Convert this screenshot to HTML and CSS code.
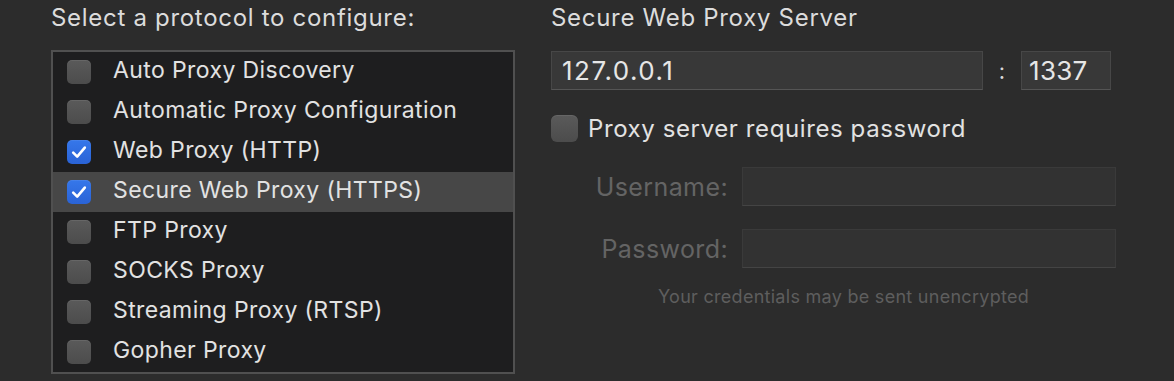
FILE: index.html
```html
<!DOCTYPE html>
<html lang="en">
<head>
<meta charset="utf-8">
<title>Proxies</title>
<link rel="stylesheet" href="styles.css">
</head>
<body>
<div class="pane">
  <section class="protocols">
    <h2 class="heading">Select a protocol to configure:</h2>
    <ul class="list">
      <li class="row"><span class="cb"></span><span class="label">Auto Proxy Discovery</span></li>
      <li class="row"><span class="cb"></span><span class="label">Automatic Proxy Configuration</span></li>
      <li class="row"><span class="cb on"><svg viewBox="0 0 24 24"><path d="M6.2 12.6 L10.2 16.6 L17.8 7.6"/></svg></span><span class="label">Web Proxy (HTTP)</span></li>
      <li class="row sel"><span class="cb on"><svg viewBox="0 0 24 24"><path d="M6.2 12.6 L10.2 16.6 L17.8 7.6"/></svg></span><span class="label">Secure Web Proxy (HTTPS)</span></li>
      <li class="row"><span class="cb"></span><span class="label">FTP Proxy</span></li>
      <li class="row"><span class="cb"></span><span class="label">SOCKS Proxy</span></li>
      <li class="row"><span class="cb"></span><span class="label">Streaming Proxy (RTSP)</span></li>
      <li class="row"><span class="cb"></span><span class="label">Gopher Proxy</span></li>
    </ul>
  </section>
  <section class="server">
    <h2 class="title">Secure Web Proxy Server</h2>
    <div class="hostrow">
      <div class="field host">127.0.0.1</div>
      <span class="colon">:</span>
      <div class="field port">1337</div>
    </div>
    <div class="pwrow"><span class="cb big"></span><span class="pwtext">Proxy server requires password</span></div>
    <div class="cred first"><span class="credlbl">Username:</span><div class="field dis"></div></div>
    <div class="cred"><span class="credlbl">Password:</span><div class="field dis"></div></div>
    <p class="note">Your credentials may be sent unencrypted</p>
  </section>
</div>
</body>
</html>
```
FILE: styles.css
```css
* { box-sizing: border-box; }
body {
  margin: 0;
  background: #2c2c2c;
  font-family: Inter, "Noto Sans", sans-serif;
  color: #dfdfdf;
}
.pane {
  display: flex;
  gap: 36px;
  padding-left: 51px;
}
.protocols { width: 464px; }
.heading {
  margin: 0 0 14px;
  font-size: 24px;
  letter-spacing: 0.7px;
  font-weight: 400;
  line-height: 36px;
  color: #dcdcdc;
}
.list {
  margin: 0;
  padding: 0;
  list-style: none;
  border: 2px solid #505050;
  background: #1e1e1f;
}
.row {
  height: 40px;
  display: flex;
  align-items: center;
  padding-left: 14px;
  gap: 22px;
  font-size: 23px;
  letter-spacing: 0.4px;
  color: #e2e2e2;
}
.row.sel { background: #474747; }
.label { position: relative; top: -2px; }
.cb {
  width: 24px;
  height: 24px;
  flex: none;
  border-radius: 5px;
  background: linear-gradient(#5a5a5a, #4c4c4c);
  box-shadow: inset 0 1px 0 rgba(255,255,255,0.08);
  display: flex;
  align-items: center;
  justify-content: center;
}
.cb.on { background: linear-gradient(#3677ea, #2a63d6); }
.cb svg { width: 24px; height: 24px; }
.cb svg path {
  fill: none;
  stroke: #fff;
  stroke-width: 2.6;
  stroke-linecap: round;
  stroke-linejoin: round;
}
.server { width: 565px; }
.title {
  margin: 0 0 15px;
  font-size: 24px;
  letter-spacing: 0.7px;
  font-weight: 400;
  line-height: 36px;
  color: #dcdcdc;
}
.hostrow {
  display: flex;
  align-items: center;
  height: 39px;
}
.field {
  height: 39px;
  background: #383838;
  border: 1px solid #474747;
  border-bottom-color: #555;
  font-size: 26px;
  letter-spacing: 0.3px;
  color: #e6e6e6;
  display: flex;
  align-items: center;
  padding-left: 10px;
}
.host { width: 432px; letter-spacing: 1.5px; }
.colon {
  width: 38px;
  text-align: center;
  font-size: 22px;
  color: #d8d8d8;
}
.port { width: 90px; padding-left: 7px; }
.pwrow {
  display: flex;
  align-items: center;
  gap: 10px;
  margin-top: 24px;
  height: 28px;
}
.cb.big { width: 27px; height: 27px; border-radius: 6px; }
.pwtext { font-size: 24px; letter-spacing: 0.6px; color: #e2e2e2; }
.cred {
  display: flex;
  align-items: center;
  gap: 14px;
  margin-top: 23px;
}
.cred.first { margin-top: 25px; }
.credlbl {
  width: 177px;
  text-align: right;
  font-size: 25px;
  letter-spacing: 0.4px;
  color: #646464;
}
.field.dis {
  width: 374px;
  background: #323232;
  border-color: #3a3a3a;
  border-bottom-color: #444;
}
.note {
  margin: 18px 0 0;
  padding-left: 20px;
  text-align: center;
  font-size: 18px;
  letter-spacing: 0.28px;
  color: #5e5e5e;
}
```
